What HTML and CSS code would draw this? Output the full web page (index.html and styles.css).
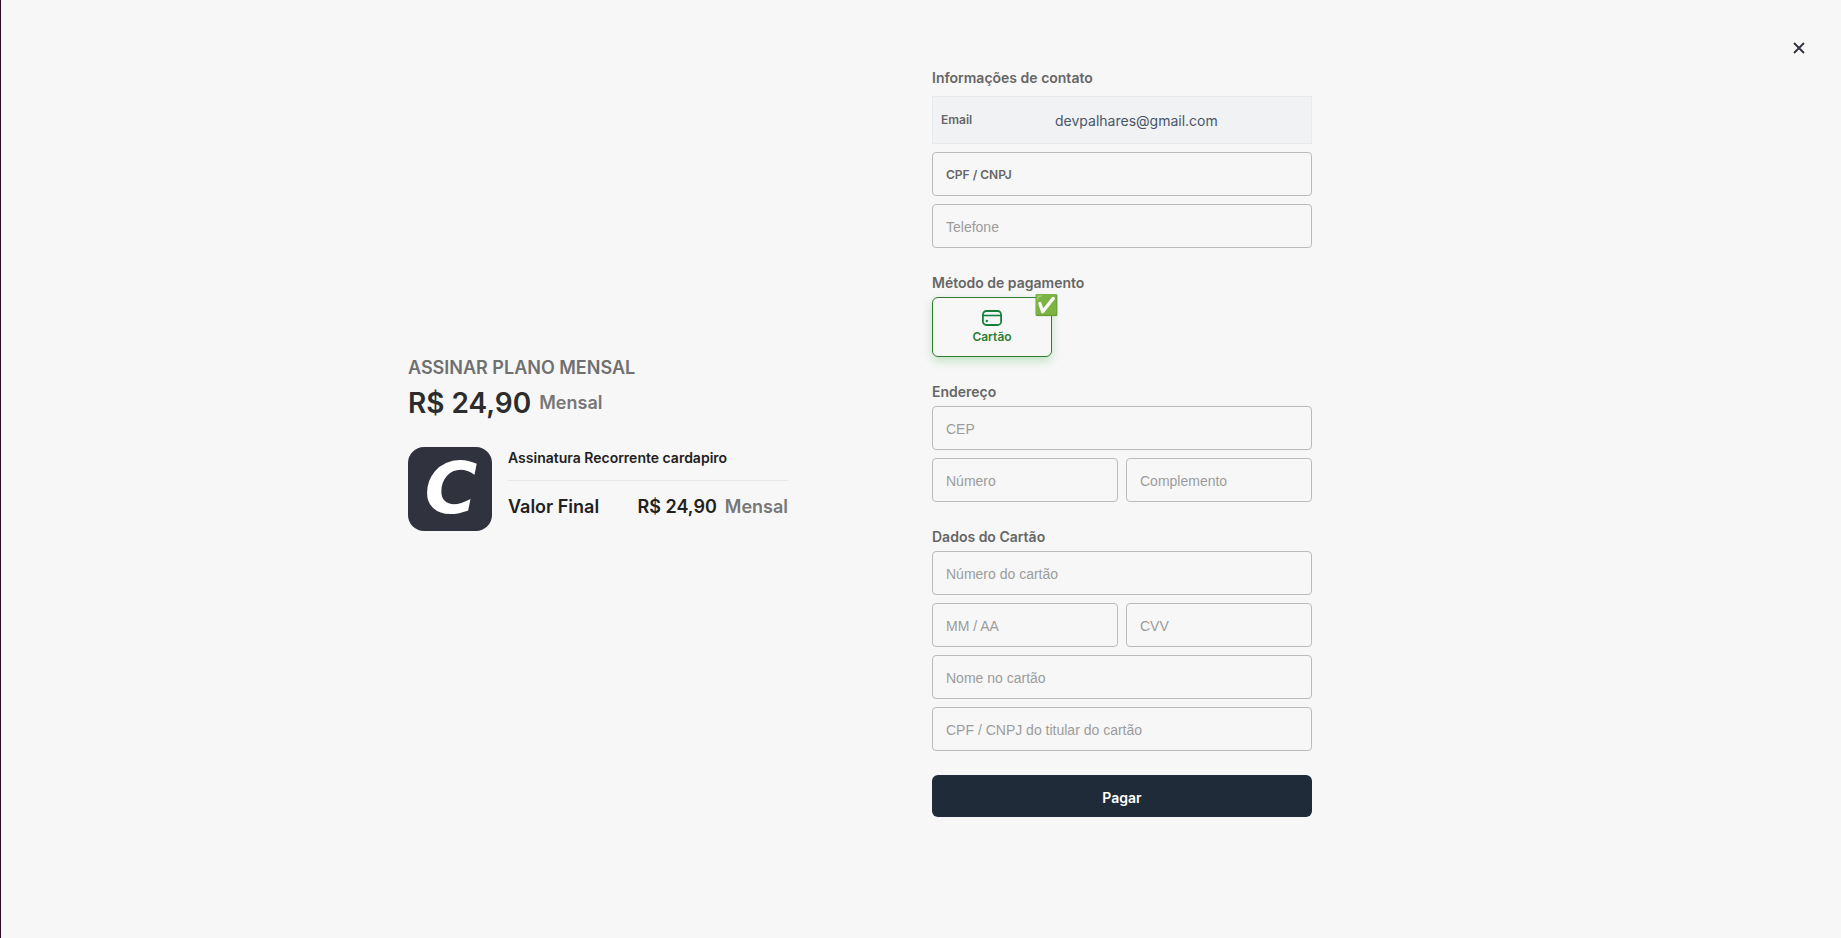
FILE: index.html
```html
<!DOCTYPE html>
<html lang="pt-BR">
<head>
<meta charset="utf-8">
<meta name="viewport" content="width=device-width, initial-scale=1">
<title>Assinar plano mensal</title>
<link rel="stylesheet" href="styles.css">
</head>
<body>
<button class="close" type="button" aria-label="Fechar">
  <svg width="12" height="12" viewBox="0 0 12 12" aria-hidden="true"><path d="M1 1l10 10M11 1L1 11" fill="none" stroke="currentColor" stroke-width="1.800"/></svg>
</button>
<main class="checkout">
  <section class="summary">
    <h1 class="summary-title">ASSINAR PLANO MENSAL</h1>
    <p class="price"><strong class="price-value">R$ 24,90</strong><span class="period">Mensal</span></p>
    <div class="product">
      <div class="logo">C</div>
      <div class="details">
        <p class="product-name">Assinatura Recorrente cardapiro</p>
        <p class="total"><span>Valor Final</span><span class="total-price">R$ 24,90<span class="period">Mensal</span></span></p>
      </div>
    </div>
  </section>
  <form class="payment">
    <section class="group">
      <h2 class="heading heading-contact">Informações de contato</h2>
      <div class="fields">
        <div class="email"><span class="email-label">Email</span><span class="email-value">devpalhares@gmail.com</span></div>
        <input class="field field-strong" type="text" placeholder="CPF / CNPJ" aria-label="CPF / CNPJ">
        <input class="field" type="tel" placeholder="Telefone" aria-label="Telefone">
      </div>
    </section>
    <section class="group">
      <h2 class="heading">Método de pagamento</h2>
      <button class="method" type="button" aria-pressed="true">
        <svg width="20" height="16" viewBox="0 0 20 16" aria-hidden="true"><rect x="0.900" y="1" width="18.200" height="14" rx="3.500" fill="none" stroke="currentColor" stroke-width="1.800"/><path d="M1 5.500h18" stroke="currentColor" stroke-width="1.600"/><circle cx="4.800" cy="11" r="1.200" fill="currentColor"/></svg>
        <span>Cartão</span>
        <span class="check" aria-hidden="true">✅</span>
      </button>
    </section>
    <section class="group">
      <h2 class="heading">Endereço</h2>
      <div class="fields">
        <input class="field" type="text" placeholder="CEP" aria-label="CEP">
        <div class="pair">
          <input class="field" type="text" placeholder="Número" aria-label="Número">
          <input class="field" type="text" placeholder="Complemento" aria-label="Complemento">
        </div>
      </div>
    </section>
    <section class="group">
      <h2 class="heading">Dados do Cartão</h2>
      <div class="fields">
        <input class="field" type="text" placeholder="Número do cartão" aria-label="Número do cartão">
        <div class="pair">
          <input class="field" type="text" placeholder="MM / AA" aria-label="Validade">
          <input class="field" type="text" placeholder="CVV" aria-label="CVV">
        </div>
        <input class="field" type="text" placeholder="Nome no cartão" aria-label="Nome no cartão">
        <input class="field" type="text" placeholder="CPF / CNPJ do titular do cartão" aria-label="CPF / CNPJ do titular do cartão">
      </div>
    </section>
    <button class="pay" type="submit">Pagar</button>
  </form>
</main>
</body>
</html>
```

FILE: styles.css
```css
* { box-sizing: border-box; }
body {
  margin: 0;
  min-height: 100vh;
  border-left: 1px solid #2a0f22;
  background: #f7f7f7;
  color: #212121;
  font-family: Inter, sans-serif;
}
h1, h2, p { margin: 0; }
button { font-family: inherit; cursor: pointer; }
.close {
  position: absolute;
  top: 32px;
  right: 26px;
  width: 32px;
  height: 32px;
  display: grid;
  place-items: center;
  padding: 0;
  border: 0;
  background: none;
  color: #30313d;
}
.checkout {
  display: grid;
  grid-template-columns: minmax(0, 380px) minmax(0, 380px);
  column-gap: 144px;
  justify-content: center;
  align-items: center;
  padding: 67px 122px 64px 0;
}
.summary-title {
  color: #707070;
  font-size: 18px;
  font-weight: 600;
  line-height: 30px;
}
.price {
  display: flex;
  align-items: center;
  gap: 8px;
  margin-bottom: 24px;
  line-height: 40px;
}
.price-value {
  color: #2c2c2c;
  font-size: 28px;
  font-weight: 600;
}
.period {
  color: #777;
  font-size: 18px;
  font-weight: 600;
}
.product { display: flex; gap: 16px; }
.logo {
  flex: none;
  width: 84px;
  height: 84px;
  padding-left: 2px;
  border-radius: 16px;
  background: #30333d;
  color: #fff;
  font: italic bold 72px/82px "DejaVu Sans", sans-serif;
  text-align: center;
}
.details { flex: 1; }
.product-name {
  padding-bottom: 12px;
  border-bottom: 1px solid #e8e8e8;
  font-size: 14px;
  font-weight: 600;
  line-height: 21px;
}
.total {
  display: flex;
  justify-content: space-between;
  padding-top: 14px;
  font-size: 18px;
  font-weight: 600;
  line-height: 24px;
}
.total-price { display: flex; gap: 8px; }
.payment { display: grid; gap: 24px; }
.heading {
  margin-bottom: 4px;
  color: #666;
  font-size: 14px;
  font-weight: 600;
  line-height: 21px;
}
.heading-contact { margin-bottom: 8px; }
.fields { display: grid; gap: 8px; }
.pair { display: grid; grid-template-columns: 1fr 1fr; gap: 8px; }
.email {
  display: grid;
  grid-template-columns: 114px 1fr;
  align-items: center;
  height: 48px;
  padding: 0 8px;
  border: 1px solid #e8ebee;
  background: #f0f2f4;
}
.email-label { padding-bottom: 2px; color: #666; font-size: 12px; font-weight: 600; }
.email-value { color: #4a5568; font-size: 14px; }
.field {
  width: 100%;
  min-width: 0;
  height: 44px;
  padding: 2px 13px 0;
  border: 1px solid #bbb;
  border-radius: 4px;
  background: transparent;
  color: #333;
  font: 14px "Liberation Sans", Arial, sans-serif;
}
.field::placeholder { color: #9c9c9c; opacity: 1; }
.field-strong { padding-top: 0; font: 600 12px Inter, sans-serif; }
.field-strong::placeholder { color: #666; }
.method {
  position: relative;
  display: flex;
  flex-direction: column;
  align-items: center;
  gap: 3px;
  width: 120px;
  height: 60px;
  padding: 12px 0 0;
  border: 1px solid #2e7d32;
  border-radius: 6px;
  background: #f7f7f7;
  box-shadow: 0 4px 10px rgba(76, 175, 80, 0.3);
  color: #2e7d32;
  font-size: 12px;
  font-weight: 600;
  line-height: 16px;
}
.method svg { color: #15803d; }
.check {
  position: absolute;
  top: -5px;
  right: -8px;
  font-size: 20px;
  line-height: 24px;
}
.pay {
  height: 42px;
  padding: 2px 0 0;
  border: 0;
  border-radius: 6px;
  background: #1f2b38;
  color: #fff;
  font-size: 14px;
  font-weight: 600;
}
```
